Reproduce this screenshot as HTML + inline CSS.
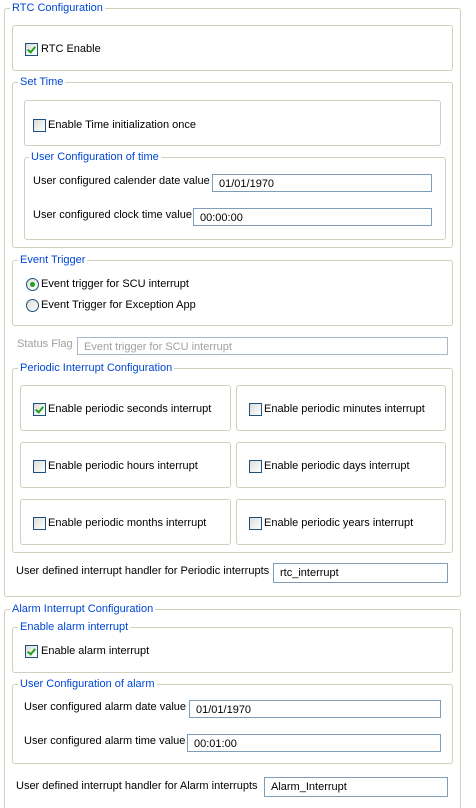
<!DOCTYPE html>
<html><head><meta charset="utf-8"><style>
html,body{margin:0;width:476px;height:808px;overflow:hidden}
body{background:#fff;position:relative;font-family:"Liberation Sans",sans-serif;font-size:11px;color:#000}
.g{position:absolute;border:1px solid #d0d0bf;border-radius:3px;box-sizing:border-box}
.t{position:absolute;background:#fff;color:#0046d5;padding:0 2px;line-height:13px;white-space:nowrap}
.l{position:absolute;line-height:13px;white-space:nowrap}
.i{position:absolute;border:1px solid #7f9db9;box-sizing:border-box;background:#fff;padding:3px 0 0 6px;line-height:13px;white-space:nowrap}
.cb{position:absolute;width:13px;height:13px;border:1px solid #1c5180;box-sizing:border-box;background:linear-gradient(135deg,#dcdcd7,#fff)}
.cb.c::after{content:"";position:absolute;left:3px;top:1px;width:3px;height:6px;border:solid #21a121;border-width:0 2px 2px 0;transform:rotate(40deg)}
.r{position:absolute;width:13px;height:13px;border:1px solid #1c5180;border-radius:50%;box-sizing:border-box;background:linear-gradient(135deg,#dcdcd7,#fff)}
.r.c::after{content:"";position:absolute;left:3px;top:3px;width:5px;height:5px;border-radius:50%;background:#21a121}
</style></head><body>
<div class="g" style="left:4px;top:8px;width:457px;height:589px"></div><div class="t" style="left:10px;top:2px">RTC Configuration</div>
<div class="g" style="left:12px;top:25px;width:441px;height:46px"></div>
<div class="cb c" style="left:25px;top:43px"></div><div class="l" style="left:41px;top:43px">RTC Enable</div>

<div class="g" style="left:12px;top:82px;width:441px;height:166px"></div><div class="t" style="left:18px;top:76px">Set Time</div>
<div class="g" style="left:24px;top:100px;width:417px;height:46px"></div>
<div class="cb" style="left:33px;top:119px"></div><div class="l" style="left:48px;top:119px">Enable Time initialization once</div>
<div class="g" style="left:24px;top:157px;width:422px;height:83px"></div><div class="t" style="left:29px;top:151px">User Configuration of time</div>
<div class="l" style="left:33px;top:175px">User configured calender date value</div><div class="i" style="left:212px;top:174px;width:220px;height:18px">01/01/1970</div>
<div class="l" style="left:33px;top:209px">User configured clock time value</div><div class="i" style="left:193px;top:208px;width:239px;height:18px">00:00:00</div>

<div class="g" style="left:12px;top:260px;width:441px;height:66px"></div><div class="t" style="left:18px;top:254px">Event Trigger</div>
<div class="r c" style="left:26px;top:278px"></div><div class="l" style="left:41px;top:278px">Event trigger for SCU interrupt</div>
<div class="r" style="left:26px;top:299px"></div><div class="l" style="left:41px;top:299px">Event Trigger for Exception App</div>

<div class="l" style="left:17px;top:338px;color:#a0a0a0">Status Flag</div><div class="i" style="left:77px;top:337px;width:371px;height:18px;border-color:#a8b8c8;color:#a0a0a0">Event trigger for SCU interrupt</div>

<div class="g" style="left:12px;top:368px;width:441px;height:185px"></div><div class="t" style="left:18px;top:362px">Periodic Interrupt Configuration</div>
<div class="g" style="left:20px;top:385px;width:211px;height:46px"></div><div class="g" style="left:236px;top:385px;width:210px;height:46px"></div>
<div class="g" style="left:20px;top:442px;width:211px;height:46px"></div><div class="g" style="left:236px;top:442px;width:210px;height:46px"></div>
<div class="g" style="left:20px;top:499px;width:211px;height:46px"></div><div class="g" style="left:236px;top:499px;width:210px;height:46px"></div>
<div class="cb c" style="left:33px;top:403px"></div><div class="l" style="left:48px;top:403px">Enable periodic seconds interrupt</div>
<div class="cb" style="left:249px;top:403px"></div><div class="l" style="left:264px;top:403px">Enable periodic minutes interrupt</div>
<div class="cb" style="left:33px;top:460px"></div><div class="l" style="left:48px;top:460px">Enable periodic hours interrupt</div>
<div class="cb" style="left:249px;top:460px"></div><div class="l" style="left:264px;top:460px">Enable periodic days interrupt</div>
<div class="cb" style="left:33px;top:517px"></div><div class="l" style="left:48px;top:517px">Enable periodic months interrupt</div>
<div class="cb" style="left:249px;top:517px"></div><div class="l" style="left:264px;top:517px">Enable periodic years interrupt</div>
<div class="l" style="left:16px;top:565px">User defined interrupt handler for Periodic interrupts</div><div class="i" style="left:273px;top:563px;width:175px;height:20px">rtc_interrupt</div>

<div class="g" style="left:4px;top:609px;width:457px;height:210px"></div><div class="t" style="left:10px;top:603px">Alarm Interrupt Configuration</div>
<div class="g" style="left:12px;top:627px;width:441px;height:46px"></div><div class="t" style="left:18px;top:621px">Enable alarm interrupt</div>
<div class="cb c" style="left:25px;top:645px"></div><div class="l" style="left:41px;top:645px">Enable alarm interrupt</div>
<div class="g" style="left:12px;top:684px;width:441px;height:80px"></div><div class="t" style="left:18px;top:678px">User Configuration of alarm</div>
<div class="l" style="left:24px;top:701px">User configured alarm date value</div><div class="i" style="left:189px;top:700px;width:252px;height:18px">01/01/1970</div>
<div class="l" style="left:24px;top:735px">User configured alarm time value</div><div class="i" style="left:187px;top:734px;width:254px;height:18px">00:01:00</div>
<div class="l" style="left:16px;top:780px">User defined interrupt handler for Alarm interrupts</div><div class="i" style="left:264px;top:777px;width:184px;height:20px">Alarm_Interrupt</div>
</body></html>
